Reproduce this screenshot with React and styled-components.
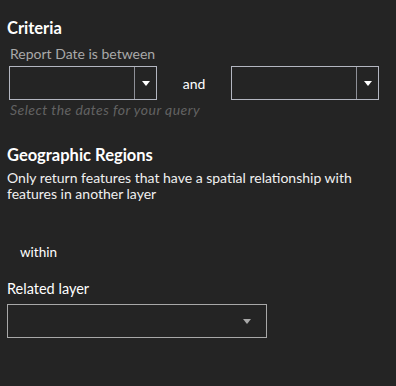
import styled, {createGlobalStyle} from 'styled-components'

const GlobalStyle = createGlobalStyle`
  html, body {
    margin: 0;
    padding: 0;
    background: #242424;
  }
  body {
    font-family: 'Lato', 'Noto Sans', sans-serif;
    color: #ffffff;
  }
`

const Panel = styled.div`
  width: 396px;
  height: 386px;
  box-sizing: border-box;
  padding: 18px 7px 0 7px;
  background: #242424;
`

const SectionTitle = styled.h2`
  margin: ${props => props.$gap || 0}px 0 0 0;
  font-size: 16.5px;
  font-weight: 700;
  line-height: 20px;
  color: #ffffff;
`

const Hint = styled.div`
  margin: 8px 0 0 3px;
  font-size: 14px;
  line-height: 16px;
  color: #a9a9a9;
`

const Note = styled.div`
  margin: 2px 0 0 3px;
  font-size: 14px;
  line-height: 16px;
  letter-spacing: 0.45px;
  font-style: italic;
  color: #626262;
`

const DateRow = styled.div`
  display: flex;
  align-items: center;
  margin: 4px 0 0 2px;
`

const DateBox = styled.div`
  width: 148px;
  height: 34px;
  box-sizing: border-box;
  border: 1px solid #b3b6c0;
  display: flex;
`

const DateField = styled.div`
  flex: 1;
  border-right: 1px solid #8e9098;
`

const ArrowCell = styled.div`
  width: 21px;
  display: flex;
  align-items: center;
  justify-content: center;
`

const Arrow = styled.div`
  width: 0;
  height: 0;
  border-left: 4px solid transparent;
  border-right: 4px solid transparent;
  border-top: 5px solid ${props => props.$color || '#ffffff'};
`

const AndLabel = styled.div`
  width: 74px;
  text-align: center;
  font-size: 14px;
`

const Description = styled.p`
  margin: 5px 0 0 0;
  font-size: 14px;
  line-height: 15.5px;
  color: #f0f0f0;
`

const Relation = styled.div`
  margin: 43px 0 0 13px;
  font-size: 13.5px;
  line-height: 16px;
`

const FieldLabel = styled.div`
  margin-top: 21px;
  font-size: 14.5px;
  line-height: 16px;
`

const Select = styled.div`
  margin-top: 7px;
  width: 260px;
  height: 34px;
  box-sizing: border-box;
  border: 1px solid #a8a8a8;
  display: flex;
  align-items: center;
  justify-content: flex-end;
  padding-right: 15px;
`

const DateInput = () => (
  <DateBox>
    <DateField />
    <ArrowCell>
      <Arrow />
    </ArrowCell>
  </DateBox>
)

export default function App() {
  return (
    <Panel>
      <GlobalStyle />
      <SectionTitle>Criteria</SectionTitle>
      <Hint>Report Date is between</Hint>
      <DateRow>
        <DateInput />
        <AndLabel>and</AndLabel>
        <DateInput />
      </DateRow>
      <Note>Select the dates for your query</Note>
      <SectionTitle $gap={27}>Geographic Regions</SectionTitle>
      <Description>
        Only return features that have a spatial relationship with
        <br />
        features in another layer
      </Description>
      <Relation>within</Relation>
      <FieldLabel>Related layer</FieldLabel>
      <Select>
        <Arrow $color="#a8a8a8" />
      </Select>
    </Panel>
  )
}
